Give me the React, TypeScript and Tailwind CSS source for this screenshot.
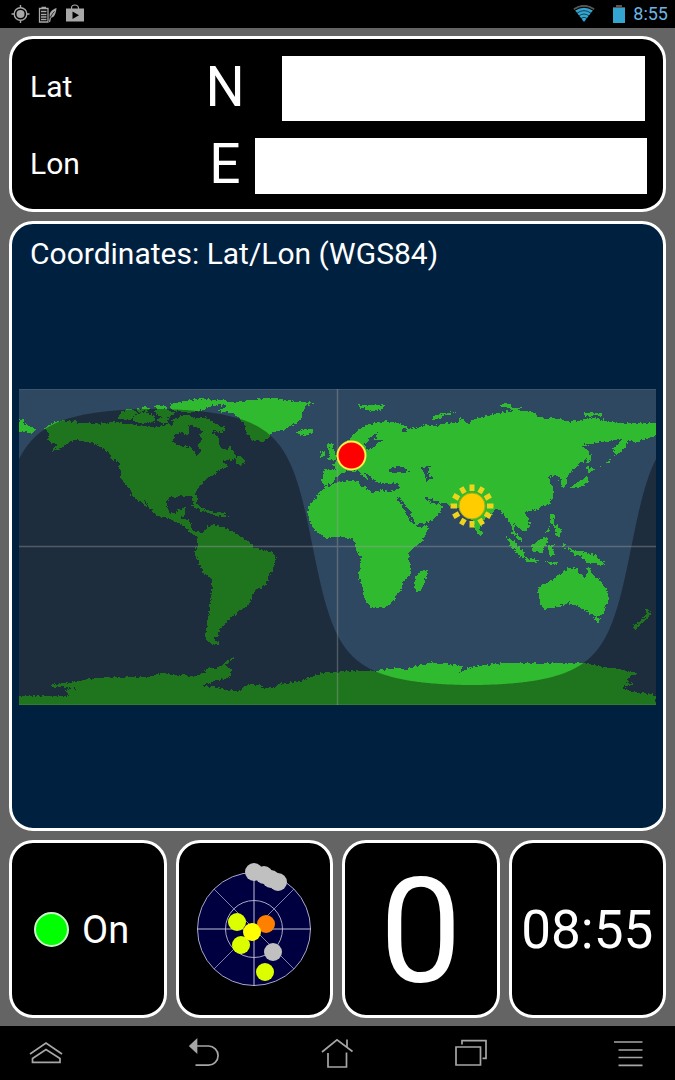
import React from 'react';

interface Satellite {
  x: number;
  y: number;
  color: string;
}

// World map frame, in map units (2:1 plate carrée)
const MAP = { left: 19, top: 389, width: 637, height: 316 };
const SUN = { x: 472, y: 506 };
const TERMINATOR_TILT = 11.4;

const LAND = [
  // Chukotka
  'M19 418 L24 420 L23 424 L32 427 L36 430 L33 434 L26 432 L19 432Z',
  // North and Central America
  'M45 429 L47 426 L55 422 L65 421 L82 423 L98 424 L112 422 L125 423 L142 426 L158 427 L168 424 L175 427 L182 426 L185 431 L175 435 L172 441 L177 445 L185 446 L192 448 L196 455 L199 456 L200 450 L198 445 L202 440 L200 434 L204 429 L211 431 L218 437 L220 447 L225 450 L230 447 L235 453 L237 459 L230 460 L222 461 L228 467 L220 470 L213 475 L207 478 L203 483 L196 491 L197 501 L194 504 L191 496 L182 496 L175 497 L168 497 L167 505 L170 513 L176 513 L178 509 L185 508 L185 512 L182 518 L190 520 L191 528 L195 532 L203 533 L198 537 L190 533 L183 526 L172 520 L158 516 L152 511 L143 498 L148 508 L146 507 L138 500 L133 497 L130 490 L123 482 L120 477 L119 462 L113 460 L108 452 L100 447 L93 443 L82 441 L75 440 L68 443 L60 448 L50 452 L58 445 L52 443 L47 440 L50 435Z',
  // Newfoundland, Arctic islands, Baffin
  'M236 457 L240 455 L245 461 L242 465 L235 463Z',
  'M117 419 L122 411 L132 409 L136 413 L130 420Z',
  'M134 415 L146 412 L155 416 L154 422 L140 424 L133 420Z',
  'M152 410 L163 408 L176 413 L168 418 L157 415Z',
  'M136 409 L147 407 L150 410 L138 412Z',
  'M156 420 L164 417 L170 421 L163 424Z',
  'M172 420 L184 415 L196 418 L206 417 L214 423 L226 429 L222 432 L212 431 L204 432 L198 427 L188 425 L190 432 L186 436 L181 430 L174 428Z',
  'M170 408 L171 404 L180 402 L195 399 L225 400 L228 403 L212 406 L202 410 L190 413 L176 411Z',
  'M152 408 L157 405 L168 407 L163 409Z',
  // Greenland, Iceland
  'M217 411 L228 406 L219 404 L242 401 L272 398 L295 401 L315 403 L305 406 L302 413 L302 417 L297 423 L285 429 L272 433 L267 438 L262 442 L252 440 L247 433 L243 422 L233 413Z',
  'M295 432 L303 430 L313 430 L313 433 L305 436 L297 434Z',
  // Caribbean
  'M190 505 L196 503 L203 508 L213 512 L211 514 L202 511Z',
  'M213 513 L220 512 L228 515 L226 517 L214 516Z',
  // South America
  'M197 547 L197 540 L200 534 L207 527 L212 525 L222 527 L230 530 L238 535 L247 540 L253 546 L257 548 L270 552 L277 557 L272 570 L268 577 L267 585 L255 590 L252 598 L246 608 L238 610 L238 613 L230 618 L225 623 L220 628 L218 635 L215 640 L221 644 L212 644 L205 638 L206 630 L210 607 L213 580 L203 572 L195 555Z',
  // British Isles
  'M327 445 L332 443 L335 452 L338 459 L327 461 L330 455Z',
  'M321 452 L325 450 L325 456 L320 457Z',
  // Eurasia and Africa
  'M322 484 L323 470 L335 469 L332 464 L341 459 L348 452 L346 442 L348 440 L355 433 L365 425 L375 423 L385 421 L398 423 L408 427 L403 430 L415 428 L425 425 L435 426 L447 423 L457 423 L460 418 L465 420 L468 425 L472 420 L482 417 L502 412 L515 410 L535 412 L538 417 L565 420 L568 422 L592 418 L612 422 L622 423 L656 423 L656 435 L638 442 L628 441 L625 447 L620 453 L615 456 L613 448 L618 443 L623 439 L612 441 L595 443 L583 446 L586 453 L585 460 L575 468 L567 475 L567 485 L562 487 L560 478 L555 475 L548 478 L553 488 L553 495 L550 503 L538 509 L528 511 L525 513 L530 522 L528 530 L523 532 L518 527 L514 524 L515 532 L522 540 L520 542 L512 532 L511 522 L505 517 L498 508 L488 517 L482 522 L480 530 L477 532 L468 513 L460 508 L450 505 L440 503 L443 507 L438 515 L428 522 L415 525 L415 527 L428 526 L428 529 L422 542 L408 553 L411 573 L402 582 L402 588 L395 598 L387 607 L370 608 L363 595 L363 588 L358 575 L362 560 L355 548 L355 543 L350 538 L335 537 L327 539 L318 533 L310 523 L308 513 L308 507 L318 495 L325 487Z',
  // Sri Lanka, Madagascar
  'M479 529 L483 533 L481 537 L478 534Z',
  'M415 577 L423 569 L428 572 L423 587 L418 593 L415 590Z',
  // Arctic Russia and Svalbard
  'M357 405 L385 405 L382 409 L372 411 L362 408Z',
  'M432 420 L433 416 L443 413 L458 412 L445 415 L438 419Z',
  'M498 405 L508 403 L512 407 L523 408 L515 411 L505 407Z',
  'M582 412 L592 413 L602 413 L602 416 L584 416Z',
  // Sakhalin, Japan, Kurils
  'M584 448 L588 450 L592 458 L588 464 L585 456Z',
  'M587 467 L596 469 L589 473Z M589 475 L588 483 L580 487 L571 488 L574 484 L582 480Z',
  'M598 467 L602 466 L602 468Z M605 463 L611 459 L609 463Z',
  // Philippines
  'M550 514 L555 516 L554 522 L561 530 L560 537 L555 535 L556 529 L550 522Z M545 533 L551 525 L549 531Z',
  // Indonesia and New Guinea
  'M506 537 L515 542 L522 550 L525 557 L520 557 L512 547Z',
  'M525 558 L538 560 L537 563 L526 561Z M544 561 L551 562 L561 562 L551 565Z',
  'M531 545 L537 541 L547 537 L548 542 L545 547 L542 553 L533 552Z',
  'M548 545 L557 544 L552 548 L556 554 L551 557 L549 552Z M563 543 L566 546 L564 550Z',
  'M566 547 L573 550 L582 551 L595 555 L605 565 L598 565 L592 563 L587 563 L583 557 L575 554Z',
  // Australia, Tasmania, New Zealand
  'M538 592 L540 585 L550 582 L557 575 L563 573 L567 568 L578 568 L578 573 L586 577 L588 565 L593 575 L602 582 L608 592 L608 602 L602 615 L595 617 L585 610 L575 605 L567 603 L558 607 L543 609 L541 605Z',
  'M594 618 L601 618 L598 624Z',
  'M645 609 L652 612 L648 619 L635 630 L632 627 L642 620 L647 614Z',
  // Antarctica
  'M19 696 L68 696 L65 690 L78 688 L50 687 L55 684 L77 682 L88 679 L115 677 L148 677 L157 674 L165 673 L172 675 L198 676 L210 668 L218 668 L228 660 L235 657 L225 665 L232 670 L230 678 L218 680 L202 686 L222 688 L238 692 L248 684 L260 685 L262 688 L275 687 L282 683 L298 682 L322 673 L345 671 L375 671 L398 668 L407 670 L415 666 L432 663 L462 666 L460 673 L468 668 L485 665 L505 663 L583 663 L598 666 L622 670 L638 673 L627 678 L627 682 L635 684 L622 687 L632 692 L642 693 L656 695 L656 708 L19 708Z',
];

const SEAS = [
  // Mediterranean, Black Sea, Caspian
  'M324 485 L332 484 L338 475 L347 471 L357 471 L364 477 L369 482 L365 473 L372 477 L377 483 L385 484 L398 483 L400 488 L390 492 L382 490 L372 492 L363 487 L358 481 L348 481 L338 482 L328 487Z',
  'M388 472 L393 467 L402 466 L410 472 L398 473Z',
  'M422 467 L430 466 L428 472 L432 479 L427 480 L424 473Z',
  // Baltic, Red Sea, Persian Gulf
  'M365 445 L370 438 L378 432 L375 440 L385 441 L377 443 L373 448 L367 450Z',
  'M397 497 L401 499 L409 510 L414 520 L415 526 L411 521 L403 508Z',
  'M425 495 L430 499 L436 500 L440 504 L432 503 L428 500Z',
  // White Sea
  'M399 430 L407 430 L405 432Z',
];

const SATELLITES: Satellite[] = [
  { x: 0, y: -57, color: '#c0c0c0' },
  { x: 10, y: -54, color: '#c0c0c0' },
  { x: 17, y: -50, color: '#c0c0c0' },
  { x: 24, y: -47, color: '#c0c0c0' },
  { x: -17, y: -7, color: '#dcff00' },
  { x: 12, y: -5, color: '#ff8000' },
  { x: -13, y: 16, color: '#dcff00' },
  { x: -2, y: 3, color: '#ffff00' },
  { x: 19, y: 23, color: '#c0c0c0' },
  { x: 11, y: 43, color: '#dcff00' },
];

// Follows the day/night line across the map and closes it along the bottom
const nightPath = () => {
  const rad = Math.PI / 180;
  const midY = MAP.top + MAP.height / 2;
  const points: string[] = [];
  for (let i = 0; i <= MAP.width; i += 1) {
    const hourAngle = ((MAP.left + i - SUN.x) / MAP.width) * 360;
    const lat = Math.atan(-Math.cos(hourAngle * rad) / Math.tan(TERMINATOR_TILT * rad)) / rad;
    points.push(`${MAP.left + i} ${(midY - (lat / 180) * MAP.height).toFixed(1)}`);
  }
  return `M${points.join('L')}V${MAP.top + MAP.height}H${MAP.left}Z`;
};

const WorldMap: React.FC = () => (
  <svg
    className="block w-full"
    viewBox={`${MAP.left} ${MAP.top} ${MAP.width} ${MAP.height}`}
    role="img"
    aria-label="World map"
  >
    <defs>
      <filter id="coast" x="0" y="0" width="1" height="1" colorInterpolationFilters="sRGB">
        <feTurbulence type="fractalNoise" baseFrequency="0.35" numOctaves="2" seed="4" />
        <feDisplacementMap in="SourceGraphic" scale="5" xChannelSelector="R" yChannelSelector="G" />
      </filter>
    </defs>
    <rect x={MAP.left} y={MAP.top} width={MAP.width} height={MAP.height} fill="#2f4861" />
    <g filter="url(#coast)" shapeRendering="crispEdges">
      <path d={LAND.join(' ')} fill="#30ba30" />
      <path d={SEAS.join(' ')} fill="#2f4861" />
    </g>
    <path d={nightPath()} fill="#000" fillOpacity="0.37" />
    <path d="M337.5 389V705M19 546.5H656" stroke="#a0a0a0" strokeOpacity="0.4" strokeWidth="1.4" />
    <path d="M19 389.5H656M19 704.5H656" stroke="#a0a0a0" strokeOpacity="0.15" />

    <circle cx="351.5" cy="455.5" r="14" fill="#f00" stroke="#ffee44" strokeWidth="2" />

    {Array.from({ length: 12 }, (_, i) => (
      <rect
        key={i}
        x={SUN.x - 2.5}
        y={SUN.y - 21.5}
        width="5"
        height="6.5"
        fill="#f0d41c"
        transform={`rotate(${i * 30} ${SUN.x} ${SUN.y})`}
      />
    ))}
    <circle cx={SUN.x} cy={SUN.y} r="13" fill="#ffcc00" stroke="#a8b010" />
  </svg>
);

const SkyView: React.FC = () => (
  <svg className="w-[140px]" viewBox="-70 -70 140 140" role="img" aria-label="Satellites">
    <circle r="56.5" fill="#000040" stroke="#a8a8c8" />
    <circle r="28.5" fill="none" stroke="#a8a8c8" />
    <path d="M-40 -40L40 40M40 -40L-40 40" stroke="#8080a8" />
    <path d="M0 -57V57M-57 0H57" stroke="#c0c0d8" />
    {SATELLITES.map((s, i) => (
      <circle key={i} cx={s.x} cy={s.y} r="9" fill={s.color} />
    ))}
  </svg>
);

const StatusBar: React.FC = () => (
  <header className="flex h-7 items-center justify-between bg-black pl-[11px] pr-[7px]">
    <div className="flex items-center gap-2 text-[#a8a8a8]">
      <svg width="19" height="20" viewBox="0 0 19 20" fill="none" stroke="currentColor">
        <circle cx="9.5" cy="10" r="6.3" strokeWidth="1.4" />
        <circle cx="9.5" cy="10" r="4" fill="currentColor" stroke="none" />
        <path d="M9.5 1V4M9.5 16V19M.5 10H3.5M15.5 10H18.5" strokeWidth="1.4" />
      </svg>
      <svg width="20" height="20" viewBox="0 0 20 20" fill="none" stroke="currentColor">
        <path d="M1.5 4.5H10V18H1.5ZM3.5 3.5H8M3 7.5H8.5M3 10.5H8.5M3 13H8.5M3 15.5H8.5" strokeWidth="1.3" />
        <path d="M18.5 4C13 6 10.5 9 12 14C16 14 18 10 18.5 4Z" fill="currentColor" stroke="none" />
        <path d="M11 18C12 13 14 10 16.5 7.5" stroke="#000" strokeWidth="0.8" />
        <path d="M11.5 18L12.5 13.5" strokeWidth="1.2" />
      </svg>
      <svg width="18" height="20" viewBox="0 0 18 20">
        <path d="M5.5 5V4a3.5 3 0 0 1 7 0V5" fill="none" stroke="currentColor" strokeWidth="1.2" />
        <path d="M0 4.5H18V17.5H0Z" fill="currentColor" />
        <path d="M6.5 7.5V15L13 11.2Z" fill="#000" />
      </svg>
    </div>
    <div className="flex items-center text-[#33a5d0]">
      <svg className="mr-[18px]" width="22" height="18" viewBox="0 0 22 18" fill="none">
        <path d="M.8 4.2Q11 -2.7 21.2 4.2" stroke="#555" strokeWidth="1.8" />
        <path d="M2.2 5.6Q11 0 19.8 5.6L11 17Z" fill="currentColor" />
        <path d="M3.5 8.5Q11 2.8 18.5 8.5M5.5 11.2Q11 6.8 16.5 11.2M7.5 14Q11 10.8 14.5 14" stroke="#000" strokeWidth="0.6" />
      </svg>
      <svg className="mr-2" width="12" height="18" viewBox="0 0 12 18">
        <path d="M3 0H9V2H12V3H0V2H3Z" fill="#555" />
        <path d="M0 3H12V18H0Z" fill="currentColor" />
      </svg>
      <time className="text-lg leading-7 text-[#6db4e4]">8:55</time>
    </div>
  </header>
);

interface NavButtonProps {
  label: string;
  className: string;
  children: React.ReactNode;
}

const NavButton: React.FC<NavButtonProps> = ({ label, className, children }) => (
  <button type="button" aria-label={label} className={`flex items-center ${className}`}>
    <svg width="34" height="30" viewBox="0 0 34 30" fill="none" stroke="#a6a6a6" strokeWidth="1.7">
      {children}
    </svg>
  </button>
);

const NavBar: React.FC = () => (
  <nav className="flex h-[54px] bg-black">
    <NavButton label="Apps" className="flex-1 pl-[29px]">
      <path d="M1 16L17 5L33 16M3.5 20.5L17 11.5L31 20.5V24.3H3.5Z" />
    </NavButton>
    <NavButton label="Back" className="w-[134px] justify-center">
      <path d="M3 8L9.5 2V14Z" fill="#a6a6a6" />
      <path d="M9 8H21.5a9.6 9.6 0 0 1 0 19.2H8.5" />
    </NavButton>
    <NavButton label="Home" className="w-[134px] justify-center">
      <path d="M1 14L16 1.8L31.5 13.5M26 1.5V9M7 15V29H25.5V14.5" />
    </NavButton>
    <NavButton label="Recent apps" className="w-[134px] justify-center">
      <path d="M1 9H25.5V27H1ZM7 6.5V2.7H31V20.3H27.5" />
    </NavButton>
    <NavButton label="Menu" className="flex-1 justify-end pr-[29px]">
      <path d="M2 4H30.5M6.5 12H30.5M6.5 19.5H30.5M6.5 27.3H30.5" />
    </NavButton>
  </nav>
);

const App: React.FC = () => {
  return (
    <div className="flex min-h-screen flex-col bg-[#646464] font-[Roboto,sans-serif] text-white">
      <StatusBar />

      <main className="flex flex-1 flex-col gap-[9px] px-[9px] py-2">
        {/* Position */}
        <section className="flex flex-col gap-[17px] rounded-3xl border-[3px] border-white bg-black pt-[17px] pr-4 pb-[15px] pl-[18px]">
          <div className="flex items-center pr-[2px]">
            <label htmlFor="lat" className="w-[175px] pb-1 text-[30px] leading-9">Lat</label>
            <span className="w-10 pb-1 text-center text-[55px] leading-[52px]">N</span>
            <input id="lat" readOnly className="ml-[37px] h-[65px] min-w-0 flex-1 bg-white px-2 text-black" />
          </div>
          <div className="flex items-center">
            <label htmlFor="lon" className="w-[175px] pb-1 text-[30px] leading-9">Lon</label>
            <span className="w-10 pb-1 text-center text-[55px] leading-[52px]">E</span>
            <input id="lon" readOnly className="ml-[10px] h-14 min-w-0 flex-1 bg-white px-2 text-black" />
          </div>
        </section>

        {/* Map */}
        <section className="flex flex-1 flex-col rounded-3xl border-[3px] border-white bg-[#00203f] px-[7px] pt-3">
          <h1 className="px-[11px] text-[30px] leading-9">Coordinates: Lat/Lon (WGS84)</h1>
          <div className="flex flex-1 items-center pb-[6px]">
            <WorldMap />
          </div>
        </section>

        {/* GPS state, satellites, speed, clock */}
        <section className="grid h-[178px] grid-cols-4 gap-[9px]">
          <div className="flex items-center gap-[13px] rounded-3xl border-[3px] border-white bg-black pl-[22px]">
            <span className="size-[35px] rounded-full border-2 border-[#c8f8c8] bg-[#00ff00]" />
            <span className="pt-[2px] text-[38px] leading-none">On</span>
          </div>
          <div className="flex items-center justify-center rounded-3xl border-[3px] border-white bg-black">
            <SkyView />
          </div>
          <div className="flex items-center justify-center rounded-3xl border-[3px] border-white bg-black">
            <span className="pt-2 text-[146px] leading-none">0</span>
          </div>
          <div className="flex items-center justify-center rounded-3xl border-[3px] border-white bg-black">
            <time className="pt-[2px] text-[53px] leading-none">08:55</time>
          </div>
        </section>
      </main>

      <NavBar />
    </div>
  );
};

export default App;
